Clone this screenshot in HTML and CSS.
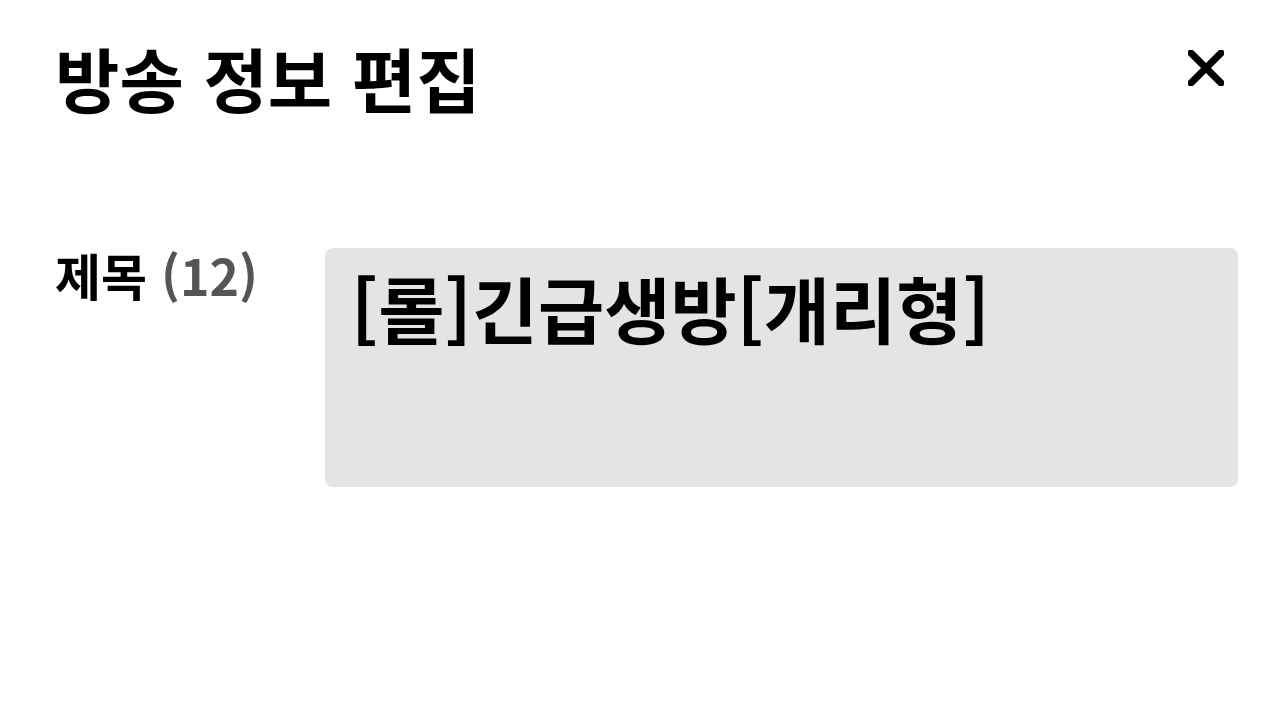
FILE: index.html
```html
<!DOCTYPE html>
<html lang="ko">
<head>
<meta charset="utf-8">
<link rel="stylesheet" href="styles.css">
</head>
<body>
<div class="dialog">
  <header class="head">
    <h1 class="title">방송 정보 편집</h1>
    <button class="close" aria-label="닫기">
      <svg viewBox="0 0 36 36" width="36" height="36"><path d="M3 3 L33 33 M33 3 L3 33" stroke="#000" stroke-width="7" stroke-linecap="round"/></svg>
    </button>
  </header>
  <div class="field">
    <div class="label">제목 <span class="count">(12)</span></div>
    <div class="box"><span class="value">[롤]긴급생방[개리형]</span></div>
  </div>
</div>
</body>
</html>
```
FILE: styles.css
```css
html, body { margin: 0; padding: 0; background: #fff; }
body { width: 1280px; height: 720px; overflow: hidden; font-family: "Noto Sans CJK KR", "Noto Sans", sans-serif; color: #000; }
.dialog { padding: 36px 42px 0 55px; }
.head { display: flex; justify-content: space-between; align-items: flex-start; }
.title { margin: 0; font-size: 70px; font-weight: 700; line-height: 1.2; }
.close { border: 0; background: none; padding: 0; margin: 14px 14px 0 0; width: 36px; height: 36px; }
.close svg { display: block; }
.field { display: flex; margin-top: 128px; }
.label { width: 270px; font-size: 50px; font-weight: 700; line-height: 1.2; margin-top: -4px; }
.count { color: #555; }
.box { flex: 1; height: 239px; background: #e4e4e4; border-radius: 8px; padding: 16px 26px; box-sizing: border-box; }
.value { font-size: 72px; font-weight: 700; line-height: 1.2; }
```
